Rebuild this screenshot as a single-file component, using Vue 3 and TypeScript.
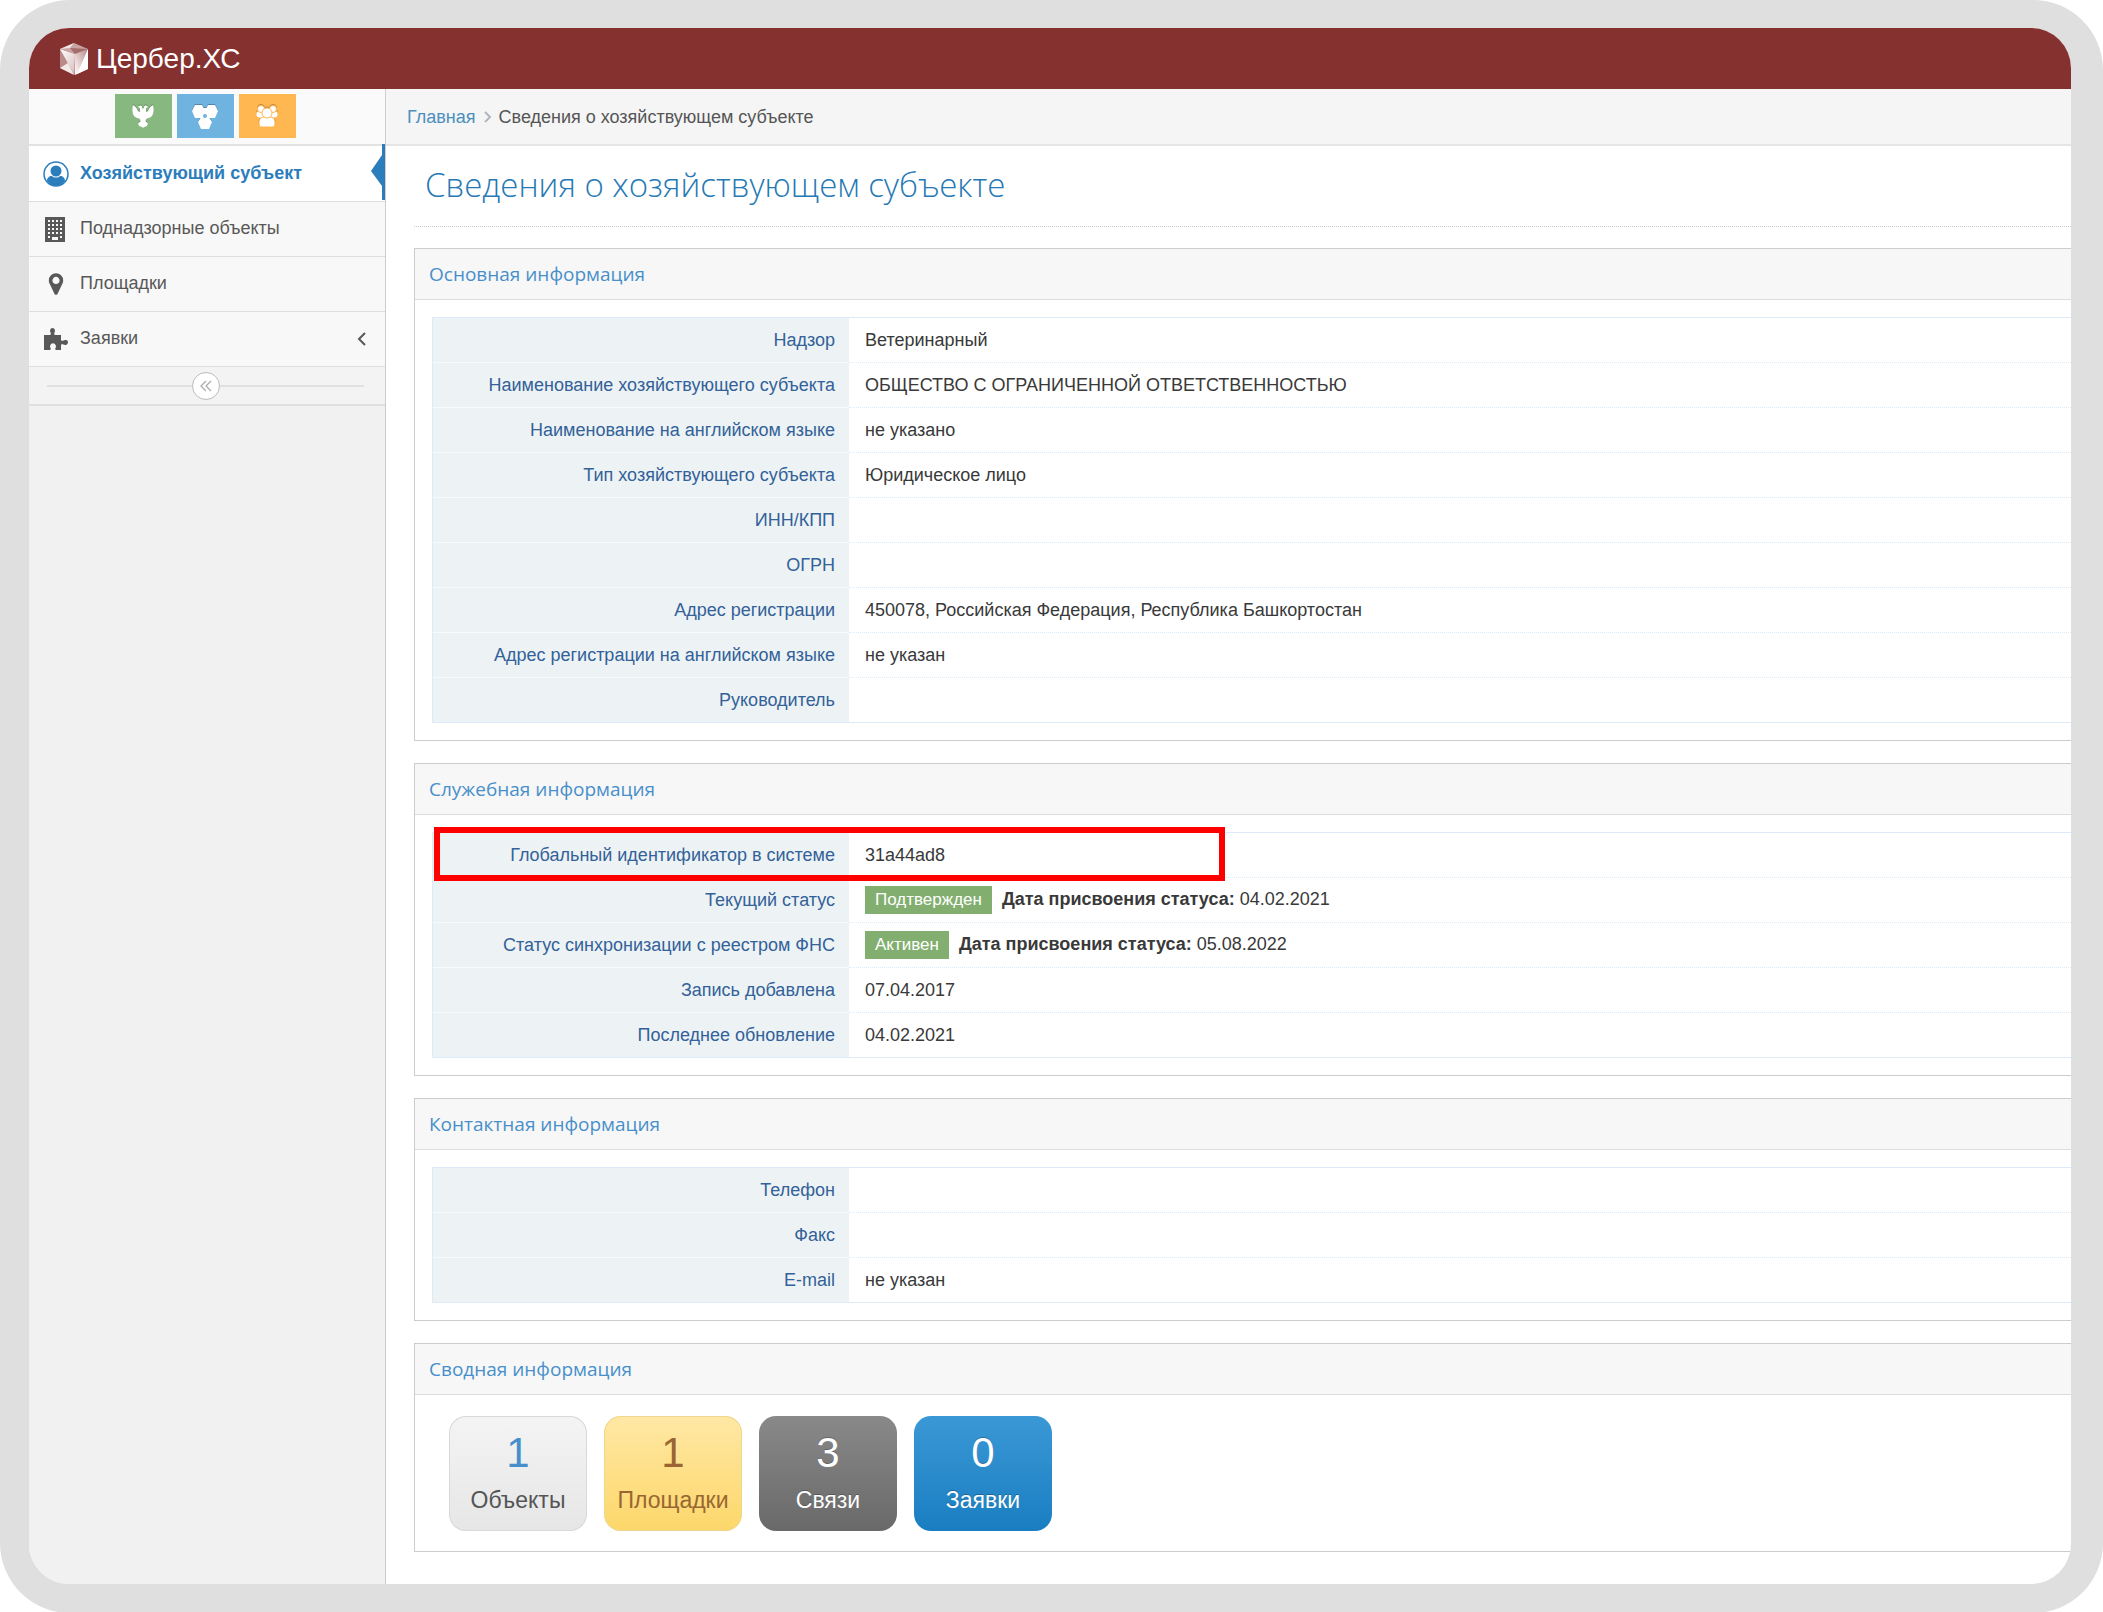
<script setup lang="ts">
interface Row {
  label: string
  value?: string
  badge?: string
  date?: string
}
interface Section {
  title: string
  rows: Row[]
  highlight?: boolean
}

const sections: Section[] = [
  {
    title: 'Основная информация',
    rows: [
      { label: 'Надзор', value: 'Ветеринарный' },
      { label: 'Наименование хозяйствующего субъекта', value: 'ОБЩЕСТВО С ОГРАНИЧЕННОЙ ОТВЕТСТВЕННОСТЬЮ' },
      { label: 'Наименование на английском языке', value: 'не указано' },
      { label: 'Тип хозяйствующего субъекта', value: 'Юридическое лицо' },
      { label: 'ИНН/КПП' },
      { label: 'ОГРН' },
      { label: 'Адрес регистрации', value: '450078, Российская Федерация, Республика Башкортостан' },
      { label: 'Адрес регистрации на английском языке', value: 'не указан' },
      { label: 'Руководитель' },
    ],
  },
  {
    title: 'Служебная информация',
    highlight: true,
    rows: [
      { label: 'Глобальный идентификатор в системе', value: '31a44ad8' },
      { label: 'Текущий статус', badge: 'Подтвержден', date: '04.02.2021' },
      { label: 'Статус синхронизации с реестром ФНС', badge: 'Активен', date: '05.08.2022' },
      { label: 'Запись добавлена', value: '07.04.2017' },
      { label: 'Последнее обновление', value: '04.02.2021' },
    ],
  },
  {
    title: 'Контактная информация',
    rows: [{ label: 'Телефон' }, { label: 'Факс' }, { label: 'E-mail', value: 'не указан' }],
  },
]

const tiles = [
  { count: 1, label: 'Объекты', kind: 'light' },
  { count: 1, label: 'Площадки', kind: 'yellow' },
  { count: 3, label: 'Связи', kind: 'grey' },
  { count: 0, label: 'Заявки', kind: 'sky' },
]
</script>

<template>
  <div class="frame">
    <div class="app">
      <header class="navbar">
        <a href="#" class="brand">
          <svg class="logo" viewBox="0 0 28 32" aria-hidden="true">
            <defs>
              <linearGradient id="facet-left" x1="0" y1="0" x2="1" y2="1">
                <stop offset="0" stop-color="#fff" />
                <stop offset="1" stop-color="#d9bfbe" />
              </linearGradient>
              <linearGradient id="facet-right" x1="0" y1="1" x2="1" y2="0">
                <stop offset="0" stop-color="#fff" />
                <stop offset="1" stop-color="#b88988" />
              </linearGradient>
            </defs>
            <path d="M14 0 28 6 15 11 0 6z" fill="#c9a3a2" />
            <path d="M14 0 0 6 10 5z" fill="#f1e6e6" />
            <path d="M10 5 28 6 15 11z" fill="#a66c6b" />
            <path d="M0 6v19l15 7V11z" fill="#b98a89" />
            <path d="M0 6 15 11 14 31z" fill="url(#facet-left)" />
            <path d="M0 25 8 20 14 32z" fill="#f3e9e9" />
            <path d="M15 11 28 6V26L15 32z" fill="url(#facet-right)" />
            <path d="M28 6V26L17 31z" fill="#fff" />
          </svg>
          <span>Цербер.ХС</span>
        </a>
      </header>

      <div class="body">
        <aside class="sidebar">
          <div class="shortcuts">
            <button type="button" class="shortcut green" aria-label="Надзор">
              <svg viewBox="0 0 22 24" width="22" height="24" aria-hidden="true">
                <g fill="#fff">
                  <path d="M1 1c2 1 4 3 5 6l4 3v4c-3 1-6 0-8-2C0 9 0 4 1 1z" />
                  <path d="M21 1c-2 1-4 3-5 6l-4 3v4c3 1 6 0 8-2 2-3 2-8 1-11z" />
                  <path d="M6 3c1-2 4-2 4 0l1 2 1-2c0-2 3-2 4 0l-2 1v3l2 3-1 4-2 3h-4l-2-3-1-4 2-3V4z" />
                  <path d="M9 15h4l1 3 2 1-1 3-3 1-1 1-1-1-3-1-1-3 2-1z" />
                </g>
              </svg>
            </button>
            <button type="button" class="shortcut blue" aria-label="Площадки">
              <svg viewBox="0 0 26 25" width="26" height="25" aria-hidden="true">
                <g fill="#fff">
                  <path d="M3 1h7l3 6-3 7H3L0 7z" />
                  <path d="M16 1h7l3 6-3 7h-7l-3-7z" />
                  <path d="M10 12h6l4 6-3 7H9l-3-7z" />
                  <path d="M10 4h6v10h-6z" />
                </g>
                <circle cx="13" cy="12" r="2" fill="#6fb3e0" />
              </svg>
            </button>
            <button type="button" class="shortcut orange" aria-label="Пользователи">
              <svg viewBox="0 0 22 22" width="22" height="22" aria-hidden="true">
                <g fill="#fff" stroke="#ffb752" stroke-width="1">
                  <rect x="0" y="6" width="8" height="7" rx="3" />
                  <rect x="14" y="6" width="8" height="7" rx="3" />
                  <circle cx="5" cy="4" r="3.5" />
                  <circle cx="17" cy="4" r="3.5" />
                  <path d="M3 18c0-4 2-6 5-6h6c3 0 5 2 5 6 0 3-1 4-3 4H6c-2 0-3-1-3-4z" />
                  <circle cx="11" cy="8" r="5" />
                </g>
              </svg>
            </button>
          </div>

          <nav>
            <ul class="menu">
              <li>
                <a href="#" class="item active">
                  <svg class="icon" viewBox="0 0 26 26" width="26" height="26" aria-hidden="true">
                    <circle cx="13" cy="13" r="12" fill="#fff" stroke="#2b7dbc" stroke-width="1.5" />
                    <circle cx="13" cy="10" r="5.5" fill="#2b7dbc" />
                    <path d="M4 20c0-3 2-5 5-5 2 2 6 2 8 0 3 0 5 2 5 5-2 3-5 5-9 5s-7-2-9-5z" fill="#2b7dbc" />
                  </svg>
                  <span>Хозяйствующий субъект</span>
                  <svg class="pointer" viewBox="0 0 14 56" width="14" height="56" aria-hidden="true">
                    <path d="M11 0h3v56h-3V42L0 27 11 11z" fill="#2b7dbc" />
                  </svg>
                </a>
              </li>
              <li>
                <a href="#" class="item">
                  <svg class="icon" viewBox="0 0 26 26" width="26" height="26" aria-hidden="true">
                    <rect x="2" y="1" width="20" height="25" fill="#585858" />
                    <path d="M5 5h14M5 9h14M5 13h14M5 17h14" stroke="#f8f8f8" stroke-width="2" stroke-dasharray="2" />
                    <path d="M5 20h2v2H5zM17 20h2v2h-2zM9 21h6v3H9z" fill="#f8f8f8" />
                  </svg>
                  <span>Поднадзорные объекты</span>
                </a>
              </li>
              <li>
                <a href="#" class="item">
                  <svg class="icon" viewBox="-416 -160 1856 1856" width="26" height="26" aria-hidden="true">
                    <path d="M768 512q0-106-75-181t-181-75-181 75-75 181 75 181 181 75 181-75 75-181zm256 0q0 109-33 179l-364 774q-16 33-47.500 52t-67.500 19-67.500-19-46.500-52l-365-774q-33-70-33-179 0-212 150-362t362-150 362 150 150 362z" fill="#585858" />
                  </svg>
                  <span>Площадки</span>
                </a>
              </li>
              <li>
                <a href="#" class="item">
                  <svg class="icon" viewBox="0 0 26 26" width="26" height="26" aria-hidden="true">
                    <path d="M1 9h6l1-1-1-3c0-4 5-4 5 0l-1 3 1 1h6v5l1 1 3-1c4-1 4 5 0 5l-3-1-1 1v5h-5l-1-1 1-2c0-5-6-5-6 0l1 2-1 1H1z" fill="#585858" />
                  </svg>
                  <span>Заявки</span>
                  <svg viewBox="0 0 9 14" width="9" height="14" aria-hidden="true">
                    <path d="M8 1 2 7l6 6" fill="none" stroke="#585858" stroke-width="2" />
                  </svg>
                </a>
              </li>
            </ul>
          </nav>

          <div class="collapse">
            <button type="button" class="toggle" aria-label="Свернуть меню">
              <svg viewBox="0 0 12 12" width="12" height="12" aria-hidden="true">
                <path d="M6 1 1 6l5 5M11 1 6 6l5 5" fill="none" stroke="#aaa" stroke-width="1.3" />
              </svg>
            </button>
          </div>
        </aside>

        <main class="main">
          <nav class="crumbs">
            <a href="#">Главная</a>
            <svg viewBox="0 0 7 12" width="7" height="12" aria-hidden="true">
              <path d="M1 1l5 5-5 5" fill="none" stroke="#b2b6bf" stroke-width="2" />
            </svg>
            <span>Сведения о хозяйствующем субъекте</span>
          </nav>

          <div class="content">
            <h1>Сведения о хозяйствующем субъекте</h1>

            <section v-for="s in sections" :key="s.title" class="panel">
              <h2>{{ s.title }}</h2>
              <div class="panel-body">
                <table>
                  <tbody>
                    <tr v-for="r in s.rows" :key="r.label">
                      <th scope="row">{{ r.label }}</th>
                      <td>
                        <template v-if="r.badge">
                          <span class="badge">{{ r.badge }}</span>
                          <b>Дата присвоения статуса:</b> {{ r.date }}
                        </template>
                        <template v-else>{{ r.value }}</template>
                      </td>
                    </tr>
                  </tbody>
                </table>
                <div v-if="s.highlight" class="highlight"></div>
              </div>
            </section>

            <section class="panel">
              <h2>Сводная информация</h2>
              <div class="tiles">
                <a v-for="t in tiles" :key="t.label" href="#" class="tile" :class="t.kind">
                  <span class="count">{{ t.count }}</span>
                  <span>{{ t.label }}</span>
                </a>
              </div>
            </section>
          </div>
        </main>
      </div>
    </div>
  </div>
</template>

<style>
body {
  margin: 0;
  background: #fff;
}
</style>

<style scoped>
* {
  box-sizing: border-box;
}
.frame {
  display: flex;
  min-height: 100vh;
  padding: 28px 32px 29px 29px;
  border-radius: 70px;
  background: #dfdfdf;
  font: 18px/24px "Liberation Sans", Arial, sans-serif;
  color: #393939;
}
.app {
  flex: 1;
  min-width: 0;
  display: flex;
  flex-direction: column;
  overflow: hidden;
  border-radius: 40px;
  background: #fff;
}
a {
  text-decoration: none;
}
.navbar {
  display: flex;
  align-items: center;
  height: 61px;
  padding-left: 31px;
  background: #853130;
}
.brand {
  display: flex;
  align-items: center;
  gap: 8px;
  color: #fff;
  font-size: 28px;
  line-height: 32px;
}
.logo {
  width: 28px;
  height: 32px;
}
.body {
  flex: 1;
  display: flex;
}
.sidebar {
  flex: none;
  width: 357px;
  border-right: 1px solid #ccc;
  background: #f1f1f1;
}
.shortcuts {
  display: flex;
  justify-content: center;
  gap: 5px;
  height: 57px;
  padding: 5px 4px 0 0;
  border-bottom: 2px solid #e2e2e2;
  background: #fafafa;
}
.shortcut {
  display: flex;
  align-items: center;
  justify-content: center;
  width: 57px;
  height: 44px;
  padding: 0;
  border: 0;
}
.shortcut svg {
  filter: drop-shadow(0 -1px 0 rgba(0, 0, 0, 0.25));
}
.shortcut.green {
  background: #87b87f;
}
.shortcut.blue {
  background: #6fb3e0;
}
.shortcut.orange {
  background: #ffb752;
}
.menu {
  margin: 0;
  padding: 0;
  list-style: none;
}
.menu li {
  border-bottom: 1px solid #dedede;
}
.item {
  position: relative;
  display: flex;
  align-items: center;
  height: 54px;
  padding: 0 19px 0 14px;
  background: #f8f8f8;
  color: #585858;
}
.item span {
  flex: 1;
  padding-bottom: 2px;
}
.icon {
  flex: none;
  margin-right: 11px;
}
.item.active {
  height: 55px;
  background: #fff;
  color: #2b7dbc;
  font-weight: bold;
}
.pointer {
  position: absolute;
  top: -2px;
  right: 0;
}
.collapse {
  display: flex;
  align-items: center;
  height: 39px;
  padding: 0 21px 0 18px;
  border-bottom: 2px solid #e0e0e0;
  background: #f3f3f3;
}
.collapse::before,
.collapse::after {
  content: "";
  flex: 1;
  height: 2px;
  background: #e0e0e0;
}
.toggle {
  display: flex;
  align-items: center;
  justify-content: center;
  width: 28px;
  height: 28px;
  padding: 0;
  border: 1px solid #bbb;
  border-radius: 50%;
  background: #fff;
}
.main {
  flex: 1;
  min-width: 0;
}
.crumbs {
  display: flex;
  align-items: center;
  gap: 8px;
  height: 57px;
  padding-left: 21px;
  border-bottom: 2px solid #e5e5e5;
  background: #f5f5f5;
  color: #555;
}
.crumbs a {
  color: #4c8fbd;
}
.content {
  padding: 0 0 32px 28px;
}
h1 {
  height: 81px;
  margin: 0 0 21px;
  padding: 16px 0 0 11px;
  border-bottom: 1px dotted #ccc;
  color: #2679b5;
  font: 300 33px/46px "Open Sans", sans-serif;
}
.panel {
  margin-bottom: 22px;
  border: 1px solid #ccc;
  border-right: 0;
}
.panel:last-child {
  margin-bottom: 0;
}
h2 {
  height: 51px;
  margin: 0;
  padding-left: 14px;
  border-bottom: 1px solid #ddd;
  background: #f7f7f7;
  color: #478fca;
  font: 400 19px/50px "Open Sans", sans-serif;
}
.panel-body {
  position: relative;
  padding: 17px 0 17px 17px;
}
table {
  width: 100%;
  border-collapse: separate;
  border-spacing: 0;
  border: 1px solid #dcebf7;
  border-width: 1px 0 0 1px;
}
tr {
  height: 45px;
}
th,
td {
  padding: 0 14px 0 16px;
  line-height: 24px;
}
th {
  width: 416px;
  border-bottom: 1px solid #f7fbff;
  background: #edf3f4;
  color: #336199;
  font-weight: normal;
  text-align: right;
}
td {
  border-bottom: 1px dotted #dcebf7;
}
tr:last-child th,
tr:last-child td {
  border-bottom: 1px solid #dcebf7;
}
.badge {
  display: inline-block;
  margin-right: 10px;
  padding: 0 10px;
  background: #82af6f;
  color: #fff;
  font-size: 17px;
  line-height: 28px;
}
.badge + b {
  margin-left: 0;
}
.highlight {
  position: absolute;
  top: 12px;
  left: 19px;
  width: 791px;
  height: 54px;
  border: 6px solid #f00;
}
.tiles {
  display: flex;
  gap: 17px;
  padding: 21px 34px 20px;
}
.tile {
  display: flex;
  flex-direction: column;
  align-items: center;
  width: 138px;
  height: 115px;
  padding-top: 21px;
  border-radius: 17px;
  font-size: 23px;
  line-height: 32px;
}
.count {
  margin-bottom: 15px;
  font-size: 42px;
}
.light {
  background: linear-gradient(#f4f4f4, #e6e6e6);
  box-shadow: inset 0 0 0 1px #d9d9d9;
  color: #555;
}
.light .count {
  color: #478fca;
}
.yellow {
  background: linear-gradient(#ffe8a5, #fcd76a);
  box-shadow: inset 0 0 0 1px #eed78d;
  color: #963;
}
.grey {
  background: linear-gradient(#898989, #696969);
}
.sky {
  background: linear-gradient(#3b98d6, #197ec1);
}
.grey,
.sky {
  color: #fff;
  text-shadow: 0 -1px 0 rgba(0, 0, 0, 0.25);
}
</style>
